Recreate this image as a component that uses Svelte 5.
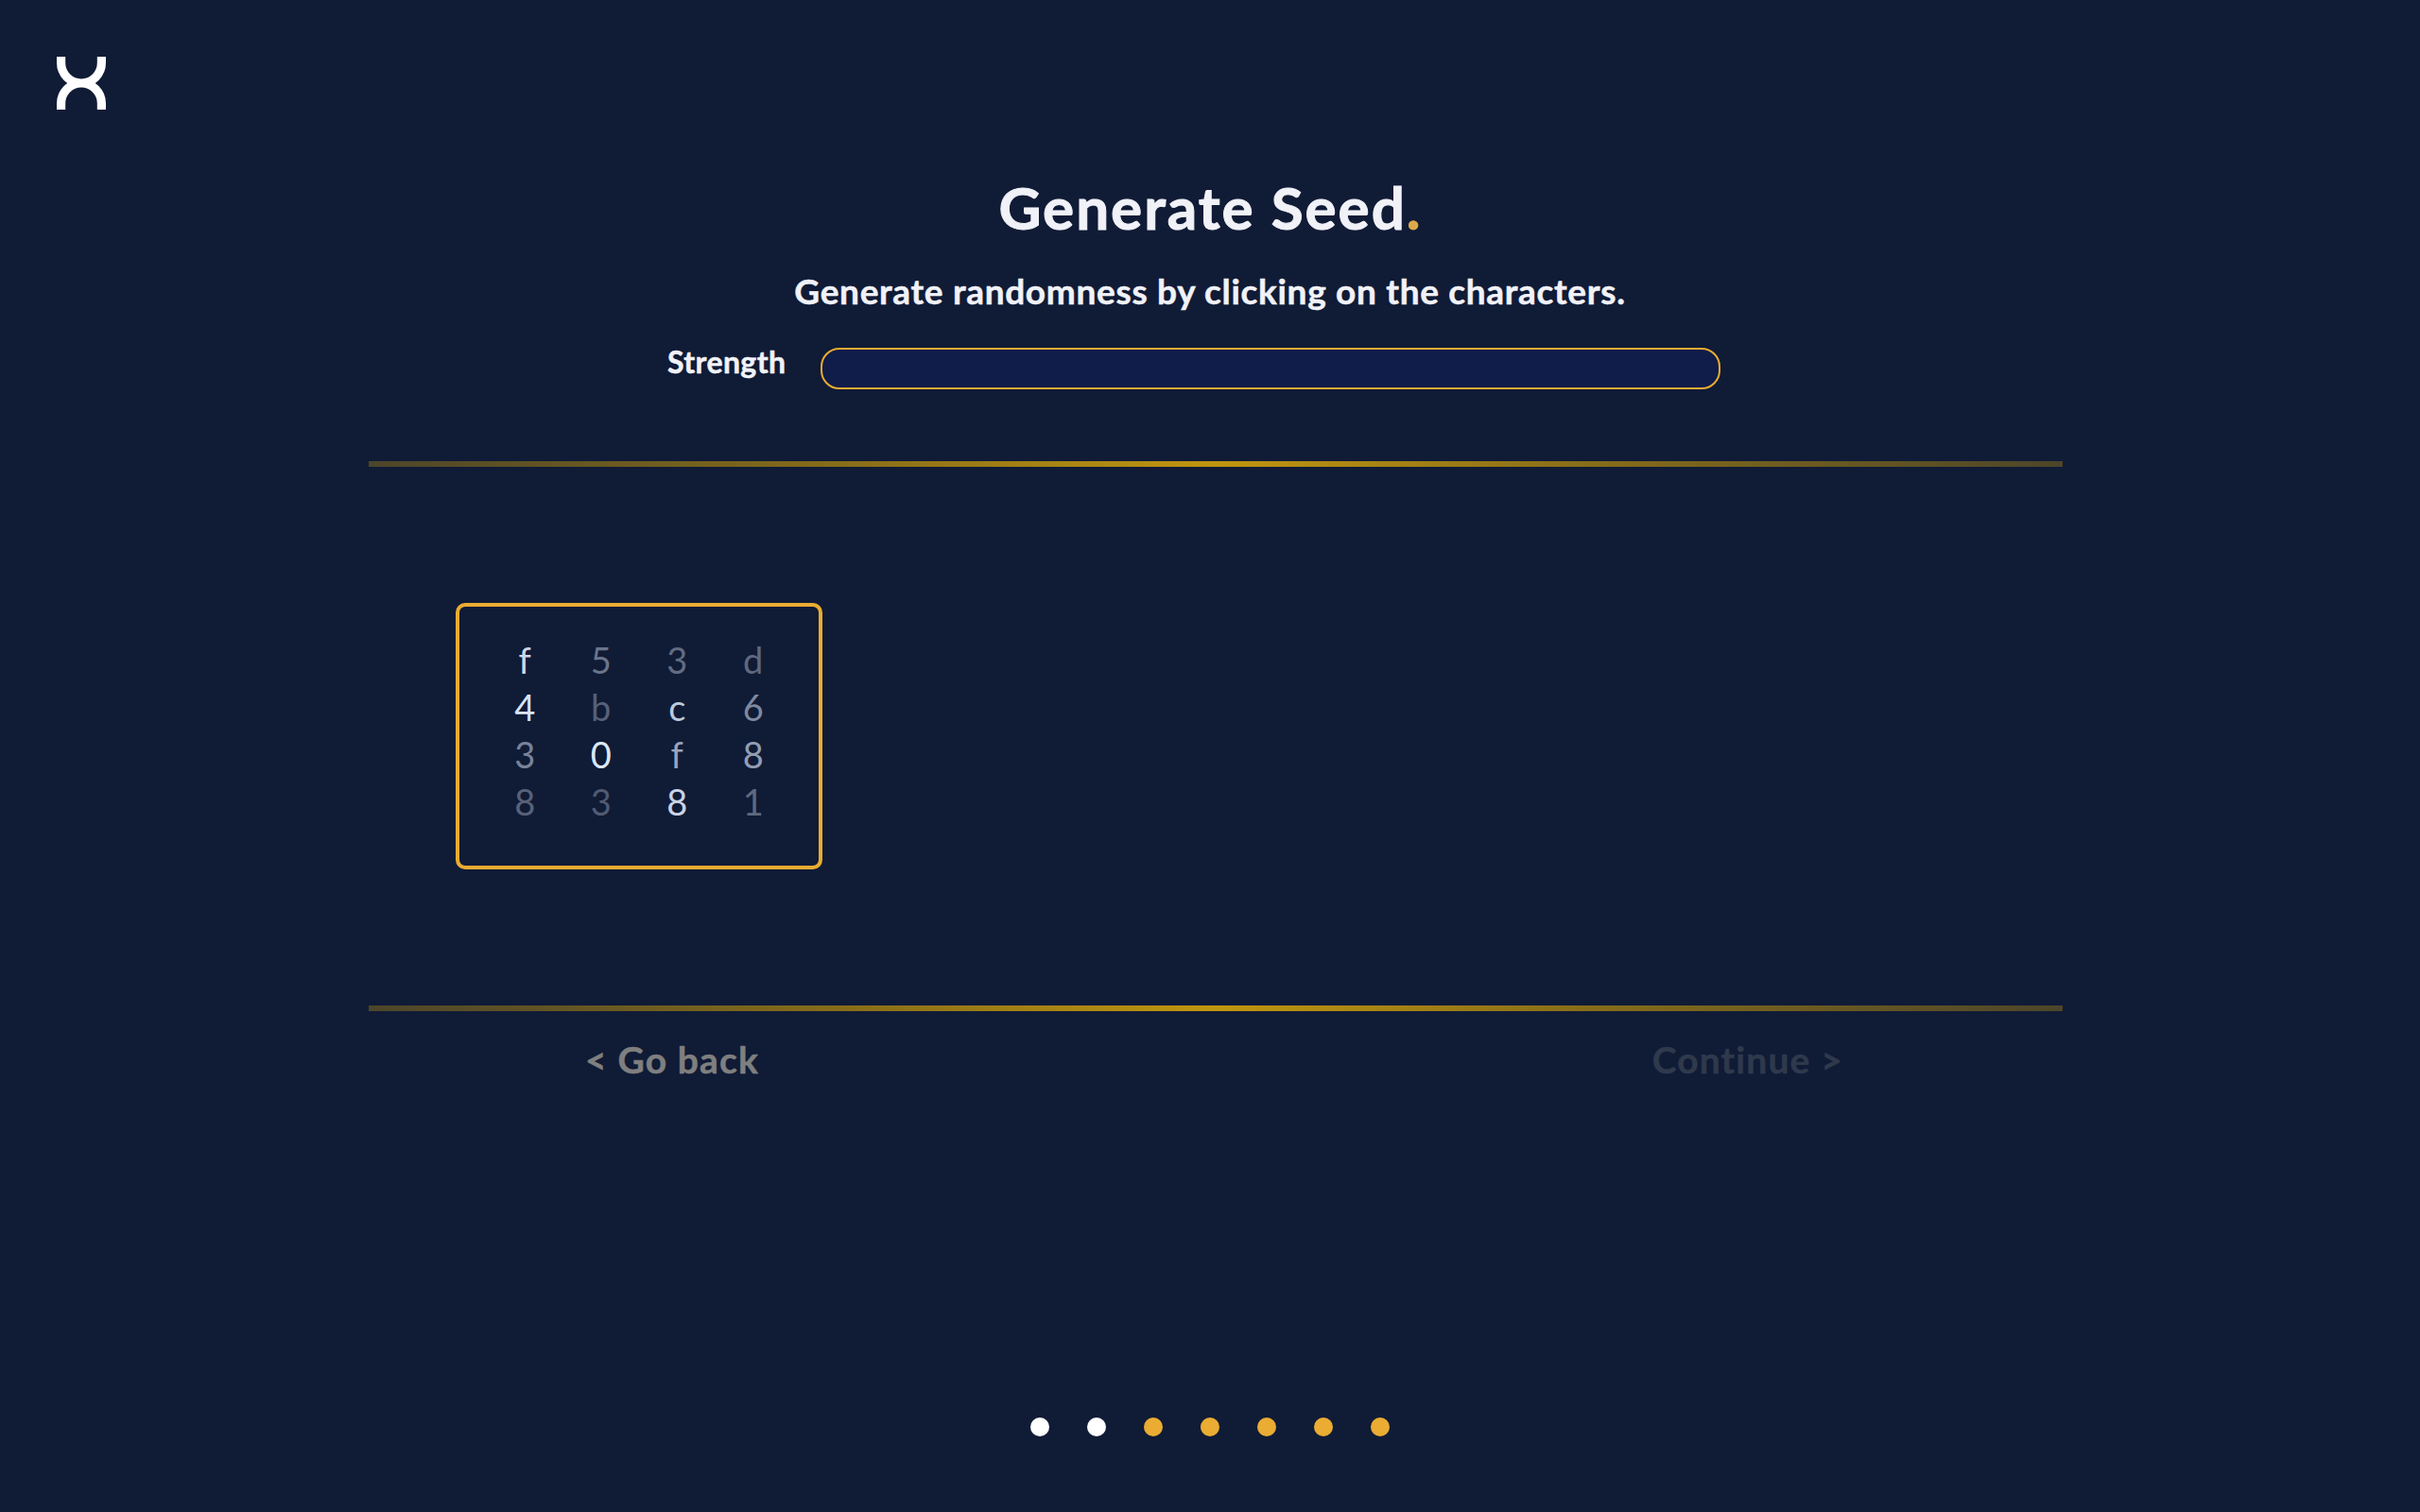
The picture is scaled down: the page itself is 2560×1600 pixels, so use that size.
<script>
  const rows = [
    [['f', '#ccd7ea'], ['5', '#6a748b'], ['3', '#616b82'], ['d', '#5e6880']],
    [['4', '#d8e4f5'], ['b', '#566078'], ['c', '#bcc8db'], ['6', '#7e899f']],
    [['3', '#78839a'], ['0', '#dce8f9'], ['f', '#9aa5bb'], ['8', '#929db3']],
    [['8', '#586279'], ['3', '#505a72'], ['8', '#c8d4e7'], ['1', '#5e687f']]
  ];
  const steps = [true, true, false, false, false, false, false];
</script>

<div class="page">
  <header>
    <svg class="logo" viewBox="0 0 52 56" aria-label="Logo">
      <path d="M4.6 0V6.6A21.4 21.4 0 0 0 47.4 6.6V0M4.6 56V49.4A21.4 21.4 0 0 1 47.4 49.4V56" />
    </svg>
  </header>

  <main>
    <h1>Generate Seed<span>.</span></h1>
    <h2>Generate randomness by clicking on the characters.</h2>
    <div class="strength">
      <span class="label">Strength</span>
      <div class="bar"></div>
    </div>

    <div class="rule"></div>
    <div class="board">
      <div class="card">
        {#each rows as row}
          {#each row as [char, color]}
            <span style:color>{char}</span>
          {/each}
        {/each}
      </div>
    </div>
    <div class="rule"></div>

    <nav>
      <button class="back">&lt; Go back</button>
      <button class="next" disabled>Continue &gt;</button>
    </nav>
  </main>

  <footer>
    {#each steps as done}
      <i class:done></i>
    {/each}
  </footer>
</div>

<style>
  :global(body) {
    background: #101b36;
  }
  .page {
    box-sizing: border-box;
    width: 2560px;
    height: 1600px;
    display: flex;
    flex-direction: column;
    background: #101b36;
    color: #f1f2f8;
    font-family: Lato, 'Open Sans', sans-serif;
    font-weight: 700;
  }
  header {
    height: 56px;
    padding: 60px 60px 0;
  }
  .logo {
    display: block;
    width: 52px;
    height: 56px;
    fill: none;
    stroke: #fff;
    stroke-width: 9.2;
  }
  main {
    flex: 1;
    display: flex;
    flex-direction: column;
  }
  h1 {
    margin: 67px 0 0;
    padding-left: 1px;
    font-size: 62px;
    line-height: 72px;
    letter-spacing: 1.95px;
    text-align: center;
    -webkit-text-stroke: 1px;
  }
  h1 span {
    color: #dcaa49;
  }
  h2 {
    margin: 31px 0 0;
    font-size: 37px;
    line-height: 44px;
    letter-spacing: 0.68px;
    text-align: center;
    -webkit-text-stroke: 0.5px;
  }
  .strength {
    display: flex;
    margin-top: 38px;
    height: 44px;
  }
  .label {
    width: 162px;
    padding-left: 706px;
    font-size: 32px;
    line-height: 29px;
    letter-spacing: 0.4px;
    -webkit-text-stroke: 0.5px;
  }
  .bar {
    box-sizing: border-box;
    width: 952px;
    border: 2px solid #eaac32;
    border-radius: 20px;
    background: #101c4a;
  }
  .rule {
    width: 1792px;
    height: 6px;
    margin-left: 390px;
    background: linear-gradient(90deg, #4c4529, #876d19 28%, #c1960f 50%, #876d19 72%, #4c4529);
  }
  .strength + .rule {
    margin-top: 76px;
  }
  .board {
    height: 570px;
    display: flex;
    align-items: center;
    padding-left: 482px;
  }
  .card {
    box-sizing: border-box;
    width: 388px;
    height: 282px;
    padding: 31px 29px 0;
    border: 4px solid #eaac32;
    border-radius: 10px;
    display: grid;
    grid-template-columns: repeat(4, 80.5px);
    grid-auto-rows: 50px;
    font-size: 38px;
    font-weight: 400;
    line-height: 50px;
    text-align: center;
  }
  nav {
    display: flex;
    justify-content: space-between;
    margin-top: 28px;
    padding: 0 610px 0 619px;
  }
  button {
    padding: 0;
    border: 0;
    background: none;
    font: inherit;
    font-size: 39px;
    line-height: 46px;
    letter-spacing: 1.15px;
    -webkit-text-stroke: 0.5px;
  }
  .back {
    color: #7f7f7f;
  }
  .next {
    color: #2f394c;
  }
  footer {
    display: flex;
    justify-content: center;
    gap: 40px;
    padding-bottom: 80px;
  }
  i {
    width: 20px;
    height: 20px;
    border-radius: 50%;
    background: #eaac32;
  }
  i.done {
    background: #fff;
  }
</style>
